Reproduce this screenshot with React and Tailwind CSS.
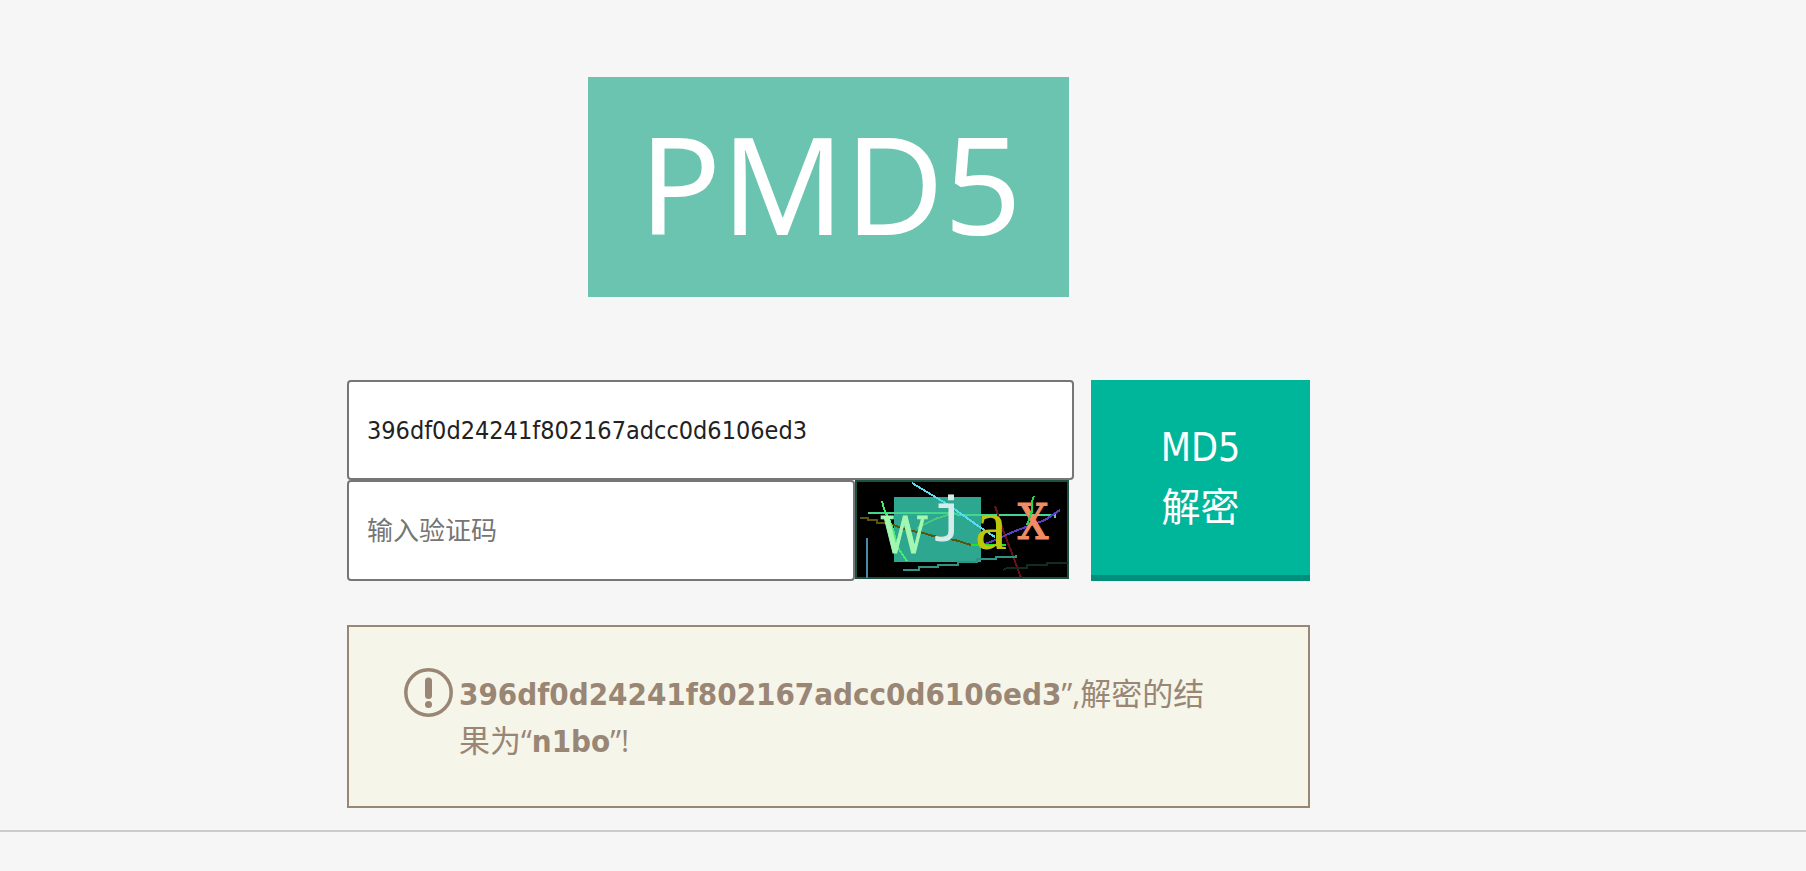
import { useState } from "react";

function Logo() {
  return (
    <svg viewBox="0 0 481 220" className="h-[220px] w-[481px] max-w-full" role="img" aria-label="PMD5">
      <rect width="481" height="220" fill="#6bc4b0" />
      <text x="51" y="158" fontSize="136" fill="#fff" className="font-['Noto_Sans',sans-serif]">PMD5</text>
    </svg>
  );
}

function Captcha() {
  return (
    <svg viewBox="0 0 214 99" className="h-[99px] w-[214px] shrink-0" role="img" aria-label="验证码">
      <rect width="214" height="99" fill="#1c5142" />
      <rect x="2" y="2" width="210" height="95" fill="#000" />
      <rect x="39" y="17" width="87" height="65" fill="#2da78f" />
      <g fill="none" strokeWidth="2" shapeRendering="crispEdges">
        <path d="M12 58V98" stroke="#4a8aa8" />
        <path d="M5 38H13V40H22V43H33L55 51L65 52L78 56L100 60L116 65" stroke="#5b550c" />
        <path d="M13 33H98L104 35H200V38" stroke="#42d68f" />
        <path d="M57 3L72 12L92 24L112 38L126 48L140 57" stroke="#5bdcf5" />
        <path d="M27 21L29 29L37 46L43 68L52 81" stroke="#43ec6b" />
        <path d="M62 48L80 39L96 34" stroke="#4dc97c" />
        <path d="M140 26L148 50L158 76L166 98" stroke="#6b0f14" />
        <path d="M128 65L140 60L160 51L190 40L205 30" stroke="#5b3cc4" />
        <path d="M48 90H64V87H83V85H103V82H122V79H141V77H161V75" stroke="#2f9484" />
        <path d="M148 90L152 88H172V85H192V83H213" stroke="#122c25" />
        <path d="M116 65H151" stroke="#1ee51e" />
      </g>
      <g textAnchor="middle">
        <text x="49" y="73" fontSize="50" strokeWidth="1" stroke="#a4f7b0" fill="#a4f7b0" className="font-['DejaVu_Serif_Condensed','DejaVu_Serif',serif]">W</text>
        <text x="93" y="51" fontSize="50" strokeWidth="1" stroke="#d5ecec" fill="#d5ecec" className="font-['Liberation_Mono',monospace]">j</text>
        <text x="136" y="69" fontSize="72" fill="#bcc60c" className="font-['Liberation_Serif',serif]">a</text>
        <text x="178" y="59" fontSize="48" strokeWidth="1" stroke="#f28c64" fill="#f28c64" className="font-['DejaVu_Serif_Condensed','DejaVu_Serif',serif]">X</text>
      </g>
      <path d="M179 16L177 21V31L172 45" fill="none" stroke="#20d850" strokeWidth="2" shapeRendering="crispEdges" />
    </svg>
  );
}

export default function App() {
  const [hash, setHash] = useState("396df0d24241f802167adcc0d6106ed3");
  return (
    <div className="min-h-screen bg-[#f6f6f6] font-['DejaVu_Sans_Condensed','Noto_Sans_CJK_SC',sans-serif]">
      <main className="flex flex-col items-center pt-[77px] pr-[149px]">
        <Logo />
        <form className="mt-[83px] flex w-full max-w-[963px] justify-between" onSubmit={(e) => e.preventDefault()}>
          <div className="w-[727px]">
            <input aria-label="MD5" value={hash} onChange={(e) => setHash(e.target.value)} className="block h-[100px] w-full rounded-[4px] border-2 border-[#767676] bg-white px-[18px] text-[25px] text-[#222]" />
            <div className="flex items-start">
              <input aria-label="验证码" placeholder="输入验证码" className="block h-[101px] w-[508px] rounded-[4px] border-2 border-[#767676] bg-white px-[18px] text-[26px] placeholder:text-[#757575]" />
              <Captcha />
            </div>
          </div>
          <button className="w-[219px] border-b-6 border-[#008f7a] bg-[#00b69a] px-[60px] text-[39px] leading-[60px] text-white">MD5 解密</button>
        </form>
        <section className="mt-[44px] flex w-full max-w-[963px] gap-[6px] border-2 border-[#998675] bg-[#f5f5e9] pt-[41px] pr-[96px] pb-[42px] pl-[55px] text-[#998675]">
          <svg viewBox="0 0 49 49" className="size-[49px] shrink-0" aria-hidden="true">
            <circle cx="24.5" cy="24.5" r="22.7" fill="none" stroke="currentColor" strokeWidth="3.5" />
            <rect x="21" y="9.5" width="7" height="21.5" rx="3.5" fill="currentColor" />
            <circle cx="24.5" cy="36.5" r="3.5" fill="currentColor" />
          </svg>
          <p className="pt-[2px] font-['Open_Sans','Noto_Sans_CJK_SC',sans-serif] text-[31px] leading-[46px]">
            <strong className="font-['DejaVu_Sans_Condensed',sans-serif]">{hash}</strong>”,解密的结果为“<strong className="font-['DejaVu_Sans_Condensed',sans-serif]">n1bo</strong>”!
          </p>
        </section>
      </main>
      <hr className="mt-[22px] border-t-2 border-[#cccccc]" />
    </div>
  );
}
